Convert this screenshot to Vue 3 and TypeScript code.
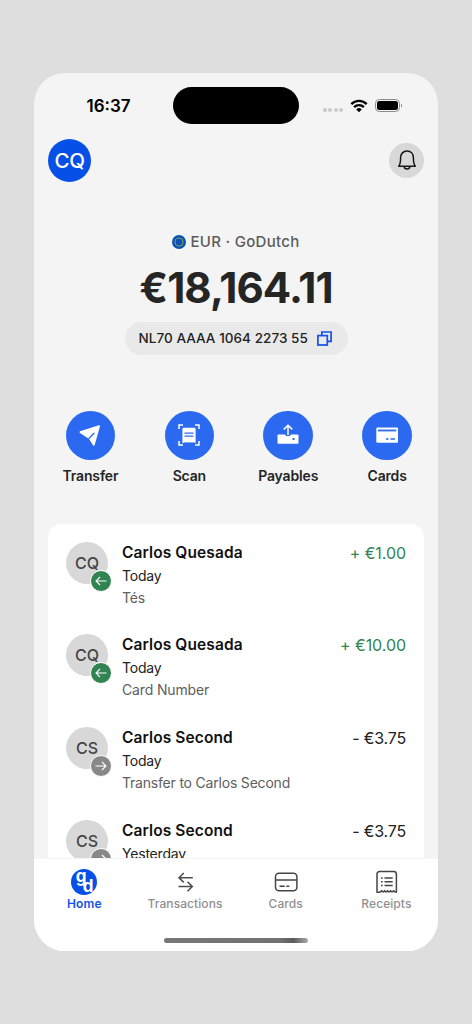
<script setup lang="ts">
interface Transaction {
  initials: string
  name: string
  day: string
  note: string
  amount: string
  incoming: boolean
}

const actions: { id: string; label: string }[] = [
  { id: 'transfer', label: 'Transfer' },
  { id: 'scan', label: 'Scan' },
  { id: 'payables', label: 'Payables' },
  { id: 'cards', label: 'Cards' },
]

const transactions: Transaction[] = [
  { initials: 'CQ', name: 'Carlos Quesada', day: 'Today', note: 'Tés', amount: '+ €1.00', incoming: true },
  { initials: 'CQ', name: 'Carlos Quesada', day: 'Today', note: 'Card Number', amount: '+ €10.00', incoming: true },
  { initials: 'CS', name: 'Carlos Second', day: 'Today', note: 'Transfer to Carlos Second', amount: '- €3.75', incoming: false },
  { initials: 'CS', name: 'Carlos Second', day: 'Yesterday', note: '', amount: '- €3.75', incoming: false },
]

const stars = Array.from({ length: 12 }, (_, i) => ({
  x: 7 + 4 * Math.cos((i * Math.PI) / 6),
  y: 7 + 4 * Math.sin((i * Math.PI) / 6),
}))
</script>

<template>
  <div class="stage">
    <main class="phone">
      <header class="status">
        <span class="time">16:37</span>
        <span class="island"></span>
        <span class="indicators">
          <span class="dots"><i v-for="n in 4" :key="n"></i></span>
          <svg class="wifi" width="18" height="14" viewBox="0 0 18 14" fill="none" stroke="#000" stroke-width="2.4">
            <path d="M1.3 5.1a10.9 10.9 0 0 1 15.4 0" />
            <path d="M4.1 8.1a7 7 0 0 1 9.8 0" />
            <path d="M9 13.2 6.2 10.4a4 4 0 0 1 5.6 0Z" fill="#000" stroke="none" />
          </svg>
          <svg width="28" height="13" viewBox="0 0 28 13">
            <rect x=".5" y=".5" width="24" height="12" rx="3.8" fill="none" stroke="#8b8b8b" />
            <rect x="2" y="2" width="21" height="9" rx="2.5" />
            <path d="M26 4.5C27.5 5 27.5 8 26 8.500Z" fill="#8b8b8b" />
          </svg>
        </span>
      </header>

      <div class="topbar">
        <span class="profile">CQ</span>
        <button class="bell" aria-label="Notifications">
          <svg width="22" height="22" viewBox="0 0 22 22" fill="none" stroke="#161616" stroke-width="1.5" stroke-linejoin="round">
            <path d="M2.700 17.200c1.500-1.900 1.900-4 1.900-8.200C4.600 4.700 7.300 2 11 2s6.400 2.700 6.400 7c0 4.200.4 6.300 1.900 8.200z" />
            <path d="M8.100 17.400c.3 3.400 5.500 3.400 5.800 0" />
          </svg>
        </button>
      </div>

      <section class="balance">
        <div class="account">
          <svg width="14" height="14" viewBox="0 0 14 14">
            <circle cx="7" cy="7" r="7" fill="#0a52b4" />
            <circle v-for="(s, i) in stars" :key="i" :cx="s.x" :cy="s.y" r=".65" fill="#c9c43c" />
          </svg>
          <span class="account-name">EUR · GoDutch</span>
        </div>
        <div class="total">€18,164.11</div>
        <div class="iban">
          <span class="iban-text">NL70 AAAA 1064 2273 55</span>
          <svg width="15" height="15" viewBox="0 0 15 15" fill="none" stroke="#1551e8" stroke-width="1.700">
            <path d="M4.800 4V1h9.300v9.300H11" />
            <rect x=".9" y="4.600" width="9.400" height="9.400" />
          </svg>
        </div>
      </section>

      <nav class="actions">
        <div v-for="a in actions" :key="a.id" class="action">
          <span class="action-icon">
            <svg v-if="a.id === 'transfer'" width="24" height="24" viewBox="0 0 24 24">
              <path d="M2.100 8.200 20.800 2.300q1.500-.3 1.100 1.200L16.700 22q-.7 1.500-1.700.2l-3.900-6.100L2 10q-1.200-1.100.1-1.800z" fill="#fff" />
              <path d="m11.100 15.200 4.900-4.900" stroke="#2b6af0" stroke-width="1.300" stroke-linecap="round" />
            </svg>
            <svg v-else-if="a.id === 'scan'" width="24" height="24" viewBox="0 0 24 24" fill="none">
              <path d="M2 6V2H6M18 2h4V6M22 18v4H18M6 22H2V18" stroke="#fff" stroke-width="1.500" />
              <path d="M5.400 6q0-1.200 1.200-1.200h10.800q1.200 0 1.200 1.200v13.800q-1.300.4-2.300-.7-1.100 1.200-2.200 0-1 1.200-2.100 0-1.100 1.200-2.200 0-1 1.200-2.100 0-1 1.200-2.300.7z" fill="#fff" />
              <path d="M7.500 10.100h9M7.500 13.100h9" stroke="#2b6af0" stroke-width="1.400" />
            </svg>
            <svg v-else-if="a.id === 'payables'" width="24" height="24" viewBox="0 0 24 24" fill="none">
              <path d="M2.500 11.400H9q.3 1.800 3 1.800t3-1.800h6.500q1 0 1 1v7.400q0 1-1 1h-19q-1 0-1-1v-7.400q0-1 1-1z" fill="#fff" />
              <path d="M12 12V3M7.800 6.400 12 2.300l4.200 4.100" stroke="#fff" stroke-width="1.500" />
              <rect x="16.500" y="15" width="2" height="2" fill="#2b6af0" />
            </svg>
            <svg v-else width="24" height="24" viewBox="0 0 24 24">
              <rect x="1.300" y="4.500" width="21.700" height="15.300" rx="1.300" fill="#fff" />
              <path d="M3 7.500h18.300" stroke="#2b6af0" stroke-width="1.800" />
              <path d="M11 16h2.500M15.500 16H20" stroke="#2b6af0" stroke-width="1.300" />
            </svg>
          </span>
          <span class="action-label">{{ a.label }}</span>
        </div>
      </nav>

      <section class="card">
        <article v-for="(t, i) in transactions" :key="i" class="row">
          <div class="avatar">
            {{ t.initials }}
            <span class="direction" :class="{ incoming: t.incoming }">
              <svg width="12" height="10" viewBox="0 0 12 10" fill="none" stroke="#fff" stroke-width="1.100">
                <path v-if="t.incoming" d="M11.500 5H1M5 1 1 5l4 4" />
                <path v-else d="M.5 5H11M7 1l4 4-4 4" />
              </svg>
            </span>
          </div>
          <div class="details">
            <div class="name">{{ t.name }}</div>
            <div class="day">{{ t.day }}</div>
            <div class="note" :class="{ long: t.note.length > 20 }">{{ t.note }}</div>
          </div>
          <div class="amount" :class="{ incoming: t.incoming }">{{ t.amount }}</div>
        </article>
      </section>

      <footer class="tabs">
        <div class="tab active">
          <span class="logo"><b class="g">g</b><b class="d">d</b></span>
          <span class="tab-label home">Home</span>
        </div>
        <div class="tab">
          <svg width="26" height="26" viewBox="0 0 26 26" fill="none" stroke="#4d4d4d" stroke-width="1.500">
            <path d="M20.800 8.700H7M11.800 4 7 8.700l4.800 4.700M6.500 17.500h13.800M15.500 12.800l4.800 4.700-4.800 4.700" />
          </svg>
          <span class="tab-label">Transactions</span>
        </div>
        <div class="tab">
          <svg width="26" height="26" viewBox="0 0 26 26" fill="none" stroke="#454545" stroke-width="1.500">
            <rect x="2.500" y="4.300" width="21.400" height="17.400" rx="3.500" />
            <path d="M2.500 11h21.400M6.500 17.300h5.200M13.300 17.300h3" />
          </svg>
          <span class="tab-label">Cards</span>
        </div>
        <div class="tab">
          <svg width="26" height="26" viewBox="0 0 26 26" fill="none" stroke="#454545" stroke-width="1.500">
            <path d="M4 23.200V5.200q0-2.700 2.700-2.700h14q2.700 0 2.700 2.700v18q-1.800 0-2.800-1.600-1.500 2.700-3 0-1.500 2.700-3 0-1.500 2.700-3 0-1.500 2.700-3 0-1 1.600-2.300 1.600-1.300 0-2.300 0z" stroke-linejoin="round" />
            <path d="M11.500 9h8.200M11.500 12.700h8.200M11.500 16.400h8.200M8 9h1.700M8 12.700h1.700M8 16.400h1.700" />
          </svg>
          <span class="tab-label">Receipts</span>
        </div>
        <span class="home-bar"></span>
      </footer>
    </main>
  </div>
</template>

<style>
body {
  margin: 0;
  background: #dedede;
}
</style>

<style scoped>
.stage {
  box-sizing: border-box;
  height: 1024px;
  padding: 72.500px 34px 0;
  overflow: hidden;
  background: #dedede;
  font-family: Inter, "Liberation Sans", sans-serif;
}
.phone {
  position: relative;
  display: flex;
  flex-direction: column;
  box-sizing: border-box;
  width: 404px;
  height: 878.500px;
  overflow: hidden;
  border-radius: 31px;
  background: #f4f4f4;
  white-space: nowrap;
}
.status {
  display: flex;
  flex: none;
  align-items: center;
  height: 66px;
}
.time {
  width: 86.500px;
  padding-left: 52.500px;
  font-size: 17px;
  font-weight: 600;
}
.island {
  width: 126px;
  height: 37px;
  border-radius: 19px;
  background: #000;
}
.indicators {
  display: flex;
  align-items: center;
  height: 13px;
  margin-left: 24px;
}
.dots {
  display: flex;
  gap: 1.300px;
  margin: 9px 7px 0 0;
}
.dots i {
  width: 4px;
  height: 4px;
  border-radius: 50%;
  background: #c9c9c9;
}
.wifi {
  margin-right: 7px;
}
.topbar {
  display: flex;
  flex: none;
  align-items: center;
  justify-content: space-between;
  height: 43px;
  padding: 0 14px;
}
.profile {
  width: 43px;
  border-radius: 50%;
  background: #0650e8;
  color: #fff;
  font-size: 20.500px;
  font-weight: 500;
  line-height: 43px;
  letter-spacing: -0.500px;
  text-align: center;
}
.bell {
  display: grid;
  place-items: center;
  width: 35px;
  height: 35px;
  padding: 0;
  border: 0;
  border-radius: 50%;
  background: #d8d8d8;
}
.balance {
  display: flex;
  flex: none;
  flex-direction: column;
  align-items: center;
  height: 229px;
}
.account {
  display: flex;
  align-items: center;
  gap: 4px;
  height: 20px;
  margin-top: 50px;
  color: #5c5c5c;
}
.account-name {
  font-size: 15px;
  font-weight: 500;
  letter-spacing: 0.300px;
}
.total {
  height: 52px;
  margin-top: 10px;
  color: #252525;
  font-size: 42px;
  font-weight: 700;
  line-height: 52px;
  letter-spacing: -0.900px;
}
.iban {
  display: flex;
  align-items: center;
  justify-content: space-between;
  box-sizing: border-box;
  width: 223px;
  height: 32.500px;
  margin-top: 8.500px;
  padding: 0 15.500px 0 14px;
  border-radius: 17px;
  background: #e9e9e9;
  color: #222;
}
.iban-text {
  font-size: 13.500px;
  font-weight: 500;
  line-height: 18px;
  letter-spacing: 0.050px;
}
.actions {
  display: flex;
  flex: none;
  height: 113px;
  padding-left: 7px;
}
.action {
  display: flex;
  flex-direction: column;
  align-items: center;
  width: 98.900px;
}
.action-icon {
  display: grid;
  place-items: center;
  width: 49.500px;
  height: 49.500px;
  border-radius: 50%;
  background: #2b6af0;
}
.action-label {
  margin-top: 6px;
  color: #252525;
  font-size: 14px;
  font-weight: 600;
  line-height: 20px;
  letter-spacing: -0.150px;
}
.card {
  flex: none;
  height: 410px;
  margin: 0 14px;
  padding: 18px 18px 0;
  border-radius: 14px;
  background: #fff;
}
.row {
  display: flex;
  height: 92.800px;
}
.avatar {
  position: relative;
  width: 42px;
  height: 42px;
  border-radius: 50%;
  background: #d8d8d8;
  color: #444;
  font-size: 16px;
  font-weight: 500;
  line-height: 42px;
  text-align: center;
}
.direction {
  position: absolute;
  left: 24px;
  top: 28px;
  display: grid;
  place-items: center;
  width: 20px;
  height: 20px;
  border: 1px solid #fff;
  border-radius: 50%;
  background: #888;
}
.direction.incoming {
  background: #318451;
}
.details {
  flex: 1;
  padding-left: 14px;
}
.name {
  height: 21px;
  color: #111;
  font-size: 15.500px;
  font-weight: 600;
  line-height: 21px;
  letter-spacing: 0.100px;
}
.day {
  margin-top: 3px;
  height: 20px;
  color: #222;
  font-size: 14px;
  line-height: 20px;
  letter-spacing: -0.200px;
}
.note {
  margin-top: 2px;
  height: 20px;
  color: #606060;
  font-size: 14px;
  line-height: 20px;
  letter-spacing: -0.150px;
}
.note.long {
  letter-spacing: -0.200px;
}
.amount {
  color: #222;
  font-size: 16px;
  line-height: 23px;
  letter-spacing: -0.200px;
}
.amount.incoming {
  color: #318451;
  letter-spacing: -0.050px;
}
.tabs {
  position: absolute;
  inset: auto 0 0;
  display: flex;
  height: 92px;
  padding-top: 10px;
  box-sizing: border-box;
  background: #fff;
  box-shadow: 0 -1px 0 #f4f4f4;
}
.tab {
  display: flex;
  flex: 0 0 100.700px;
  flex-direction: column;
  align-items: center;
}
.tab-label {
  margin-top: 1px;
  color: #909090;
  font-size: 12px;
  font-weight: 500;
  line-height: 16px;
  letter-spacing: 0.080px;
}
.tab-label.home {
  color: #1152e6;
  font-weight: 600;
}
.logo {
  position: relative;
  width: 26px;
  height: 26px;
  border-radius: 50%;
  background: #0650e8;
  color: #fff;
}
.logo b {
  position: absolute;
  font: bold 17px/9px Inter, sans-serif;
}
.logo .g {
  left: 4.500px;
  top: 3px;
}
.logo .d {
  left: 11.500px;
  top: 13px;
}
.home-bar {
  position: absolute;
  left: 130px;
  bottom: 8px;
  width: 144px;
  height: 5px;
  border-radius: 3px;
  background: linear-gradient(90deg, #777 0, #727272 80%, #5b5b5b 90%, #aaa);
}
</style>
